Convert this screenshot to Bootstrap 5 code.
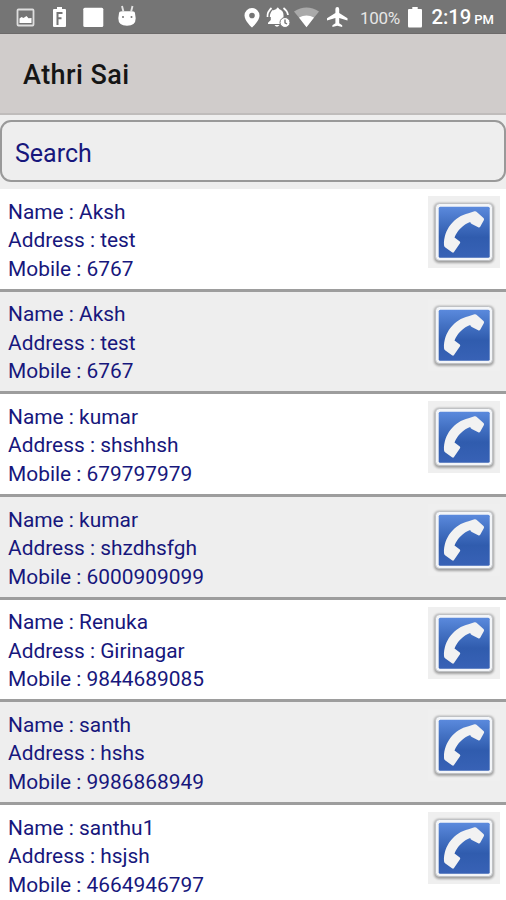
<!DOCTYPE html>
<html lang="en">
<head>
<meta charset="utf-8">
<meta name="viewport" content="width=device-width, initial-scale=1">
<title>Athri Sai</title>
<link href="https://cdn.jsdelivr.net/npm/bootstrap@5.3.0/dist/css/bootstrap.min.css" rel="stylesheet">
<style>
body { font-family: Roboto, "Liberation Sans", sans-serif; background: #eee; height: 900px; overflow: hidden; }
.phone-status { height: 34px; background: #757575; border-bottom: 1px solid #6c6a6a; color: #fff; padding: 0 12px 0 16px; }
.phone-status svg { display: block; flex: none; }
.pct { font-size: 17px; color: #e6e6e6; width: 40px; line-height: 34px; letter-spacing: -.3px; padding-top: 2px; }
.clock { font-size: 20.3px; font-weight: 500; line-height: 34px; padding: 3px 0 0 9.5px; }
.clock small { font-size: 13px; margin-left: 3px; }
.title-bar { height: 81px; background: #d0cccb; border-bottom: 2px solid #bfbcbb; padding: 4px 0 0 23px; }
.title-bar h1 { font-size: 27px; font-weight: 500; color: #151515; letter-spacing: .45px; }
.search-wrap { height: 74px; padding: 5px 0 7px; }
.search-wrap .form-control { height: 62px; border: 2.5px solid #999; border-radius: 11px; background: #eee; padding: 4px 12px 0 13px; font-size: 25px; color: #17177c; }
.search-wrap .form-control::placeholder { color: #17177c; opacity: 1; }
.contact { height: 102.67px; border-bottom: 3px solid #9d9d9d; padding: 7px 6px 0 8px; color: #17177c; font-size: 20.9px; line-height: 28.5px; background: #fff; }
.contact:nth-child(even) { background: #eee; }
.contact > div { padding-top: 1.6px; }
.contact svg { display: block; }
</style>
<script src="https://cdn.jsdelivr.net/npm/bootstrap@5.3.0/dist/js/bootstrap.bundle.min.js"></script>
</head>
<body>
<svg width="0" height="0" class="position-absolute" aria-hidden="true">
  <defs>
    <linearGradient id="blue" x1="0" y1="0" x2="0" y2="1"><stop offset="0" stop-color="#5b8add"/><stop offset=".3" stop-color="#4472c4"/><stop offset=".6" stop-color="#305cae"/><stop offset="1" stop-color="#3862b6"/></linearGradient>
    <filter id="soft" x="-20%" y="-20%" width="140%" height="140%"><feGaussianBlur stdDeviation="1.3"/></filter>
    <symbol id="call" viewBox="0 0 72 72">
      <rect width="72" height="72" fill="#efefef"/>
      <rect x="6" y="7" width="60" height="60" rx="5" fill="#a0a0a0" filter="url(#soft)"/>
      <rect x="7.500" y="7.500" width="57" height="57" rx="4" fill="#f3f5f8" stroke="#bfc1c4"/>
      <rect x="10.700" y="10.700" width="51" height="51" rx="1.500" fill="url(#blue)"/>
      <path d="M46.500 15.300Q47.600 14.900 48.500 15.700L55.500 22Q56.500 23 55.800 24.200L52.200 30.800Q51.400 32 50.200 31.200L43.800 28Q42.600 27.400 42.200 26C36 28 29 34.500 26.500 41.500L31.800 45.500Q32.600 46.200 32 47.200L26 56Q25.200 57.200 24 56.200L17 51.300Q16 50.500 16 49C15.500 34 26 20.500 40.500 17.300Z" fill="#f2f2f2"/>
    </symbol>
  </defs>
</svg>

<header class="phone-status d-flex align-items-center justify-content-between">
  <svg width="122" height="34" viewBox="16 0 122 34" fill="#fff">
    <rect x="17.500" y="9.500" width="16" height="16" rx="1" fill="none" stroke="#dedede" stroke-width="1.800"/>
    <path d="M19.500 18.500l2-1.500 2 1 3-2 2 2.200 3-.2v5h-12z"/>
    <path d="M54 9h3V7h5v2h3q1 0 1 1v16q0 1-1 1H54q-1 0-1-1V10q0-1 1-1z"/>
    <path d="M57.500 25V13h5M57.500 18.300h4" fill="none" stroke="#757575" stroke-width="2"/>
    <rect x="83.300" y="7.700" width="20" height="19.300" rx="1.500"/>
    <path d="M119 13.300q0-2 3-2h10q3 0 3 2l.7 5q0 7.500-8.700 7.500t-8.700-7.500z"/>
    <path d="M122 6l1.500 6M132.500 6l-1.500 6" stroke="#e4e4e4" stroke-width="1.900"/>
    <circle cx="123" cy="17" r="1" fill="#757575"/><circle cx="131.500" cy="17" r="1" fill="#757575"/>
  </svg>
  <div class="d-flex align-items-center">
    <svg width="116" height="34" viewBox="243 0 116 34" fill="#fff">
      <path fill-rule="evenodd" d="M251 8a7.500 7.500 0 0 0-7.500 7.500c0 5.500 7.500 12 7.500 12s7.500-6.500 7.500-12A7.500 7.500 0 0 0 251 8zm0 4.700a2.800 2.800 0 1 1 0 5.600 2.800 2.800 0 0 1 0-5.600z"/>
      <path d="M266.500 17q-.5-5 4-9M287 15q-.5-4-4.500-7M269.700 17q0-4 2.800-6.500" fill="none" stroke="#fff" stroke-width="1.700"/>
      <path d="M275.500 9q0-1.500 1.200-1.500T278 9q4.500 1.500 4.500 6v4l1 5H267v-1.200l2.800-2.800v-5q0-4.500 5.700-6zM273.500 25h5q-2.500 3.500-5 0z"/>
      <circle cx="284" cy="22.500" r="5" stroke="#757575"/>
      <path d="M284 19.500v3.300l2 1.200" fill="none" stroke="#757575" stroke-width="1.400"/>
      <path d="M293 11.500q12.500-8 25 0L305.500 27z" fill="#a9a9a9"/>
      <path d="M298 17.500q7.500-4 15 0L305.500 27.300z"/>
      <path d="M346.500 20.500v-2.300l-8.300-5.200V9q0-2-1.900-2t-1.900 2v4l-8.400 5.200v2.300l8.400-2.500v5.300l-3 2V27l4.900-1.300 4.900 1.300v-1.700l-3-2V18z"/>
    </svg>
    <span class="pct">100%</span>
    <svg class="ms-2" width="14" height="34" viewBox="0 0 14 34" fill="#fff"><path d="M1 9h3.300V7h5.400V9H13q1 0 1 1v16q0 1.500-1 1.500H1q-1 0-1-1.500V10q0-1 1-1z"/></svg>
    <span class="clock text-nowrap">2:19<small>PM</small></span>
  </div>
</header>

<nav class="title-bar d-flex align-items-center"><h1 class="mb-0">Athri Sai</h1></nav>

<div class="search-wrap"><input class="form-control" type="text" placeholder="Search" aria-label="Search"></div>

<main class="list-group list-group-flush">
  <div class="contact d-flex justify-content-between flex-shrink-0"><div>Name : Aksh<br>Address : test<br>Mobile : 6767</div><svg width="72" height="72"><use href="#call"/></svg></div>
  <div class="contact d-flex justify-content-between flex-shrink-0"><div>Name : Aksh<br>Address : test<br>Mobile : 6767</div><svg width="72" height="72"><use href="#call"/></svg></div>
  <div class="contact d-flex justify-content-between flex-shrink-0"><div>Name : kumar<br>Address : shshhsh<br>Mobile : 679797979</div><svg width="72" height="72"><use href="#call"/></svg></div>
  <div class="contact d-flex justify-content-between flex-shrink-0"><div>Name : kumar<br>Address : shzdhsfgh<br>Mobile : 6000909099</div><svg width="72" height="72"><use href="#call"/></svg></div>
  <div class="contact d-flex justify-content-between flex-shrink-0"><div>Name : Renuka<br>Address : Girinagar<br>Mobile : 9844689085</div><svg width="72" height="72"><use href="#call"/></svg></div>
  <div class="contact d-flex justify-content-between flex-shrink-0"><div>Name : santh<br>Address : hshs<br>Mobile : 9986868949</div><svg width="72" height="72"><use href="#call"/></svg></div>
  <div class="contact d-flex justify-content-between flex-shrink-0"><div>Name : santhu1<br>Address : hsjsh<br>Mobile : 4664946797</div><svg width="72" height="72"><use href="#call"/></svg></div>
</main>
</body>
</html>
